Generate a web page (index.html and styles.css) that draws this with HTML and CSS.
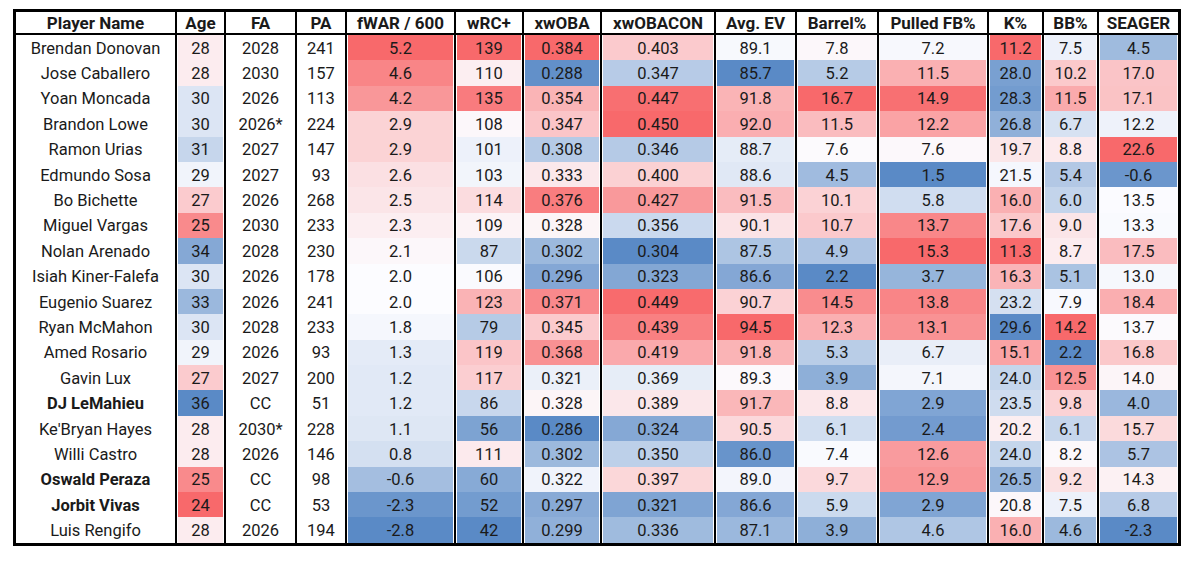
FILE: index.html
```html
<!DOCTYPE html>
<html lang="en">
<head>
<meta charset="utf-8">
<title>Infielder comparison</title>
<link rel="stylesheet" href="styles.css">
</head>
<body>
<div class="wrap">
<table class="stats" id="stats">
<thead>
<tr>
<th class="c1">Player Name</th><th class="c2">Age</th><th class="c3">FA</th><th class="c4">PA</th><th class="c5">fWAR / 600</th><th class="c6">wRC+</th><th class="c7">xwOBA</th><th class="c8">xwOBACON</th><th class="c9">Avg. EV</th><th class="c10">Barrel%</th><th class="c11">Pulled FB%</th><th class="c12">K%</th><th class="c13">BB%</th><th class="c14">SEAGER</th>
</tr>
</thead>
<tbody>
<tr><td>Brendan Donovan</td><td>28</td><td>2028</td><td>241</td><td>5.2</td><td>139</td><td>0.384</td><td>0.403</td><td>89.1</td><td>7.8</td><td>7.2</td><td>11.2</td><td>7.5</td><td>4.5</td></tr>
<tr><td>Jose Caballero</td><td>28</td><td>2030</td><td>157</td><td>4.6</td><td>110</td><td>0.288</td><td>0.347</td><td>85.7</td><td>5.2</td><td>11.5</td><td>28.0</td><td>10.2</td><td>17.0</td></tr>
<tr><td>Yoan Moncada</td><td>30</td><td>2026</td><td>113</td><td>4.2</td><td>135</td><td>0.354</td><td>0.447</td><td>91.8</td><td>16.7</td><td>14.9</td><td>28.3</td><td>11.5</td><td>17.1</td></tr>
<tr><td>Brandon Lowe</td><td>30</td><td>2026*</td><td>224</td><td>2.9</td><td>108</td><td>0.347</td><td>0.450</td><td>92.0</td><td>11.5</td><td>12.2</td><td>26.8</td><td>6.7</td><td>12.2</td></tr>
<tr><td>Ramon Urias</td><td>31</td><td>2027</td><td>147</td><td>2.9</td><td>101</td><td>0.308</td><td>0.346</td><td>88.7</td><td>7.6</td><td>7.6</td><td>19.7</td><td>8.8</td><td>22.6</td></tr>
<tr><td>Edmundo Sosa</td><td>29</td><td>2027</td><td>93</td><td>2.6</td><td>103</td><td>0.333</td><td>0.400</td><td>88.6</td><td>4.5</td><td>1.5</td><td>21.5</td><td>5.4</td><td>-0.6</td></tr>
<tr><td>Bo Bichette</td><td>27</td><td>2026</td><td>268</td><td>2.5</td><td>114</td><td>0.376</td><td>0.427</td><td>91.5</td><td>10.1</td><td>5.8</td><td>16.0</td><td>6.0</td><td>13.5</td></tr>
<tr><td>Miguel Vargas</td><td>25</td><td>2030</td><td>233</td><td>2.3</td><td>109</td><td>0.328</td><td>0.356</td><td>90.1</td><td>10.7</td><td>13.7</td><td>17.6</td><td>9.0</td><td>13.3</td></tr>
<tr><td>Nolan Arenado</td><td>34</td><td>2028</td><td>230</td><td>2.1</td><td>87</td><td>0.302</td><td>0.304</td><td>87.5</td><td>4.9</td><td>15.3</td><td>11.3</td><td>8.7</td><td>17.5</td></tr>
<tr><td>Isiah Kiner-Falefa</td><td>30</td><td>2026</td><td>178</td><td>2.0</td><td>106</td><td>0.296</td><td>0.323</td><td>86.6</td><td>2.2</td><td>3.7</td><td>16.3</td><td>5.1</td><td>13.0</td></tr>
<tr><td>Eugenio Suarez</td><td>33</td><td>2026</td><td>241</td><td>2.0</td><td>123</td><td>0.371</td><td>0.449</td><td>90.7</td><td>14.5</td><td>13.8</td><td>23.2</td><td>7.9</td><td>18.4</td></tr>
<tr><td>Ryan McMahon</td><td>30</td><td>2028</td><td>233</td><td>1.8</td><td>79</td><td>0.345</td><td>0.439</td><td>94.5</td><td>12.3</td><td>13.1</td><td>29.6</td><td>14.2</td><td>13.7</td></tr>
<tr><td>Amed Rosario</td><td>29</td><td>2026</td><td>93</td><td>1.3</td><td>119</td><td>0.368</td><td>0.419</td><td>91.8</td><td>5.3</td><td>6.7</td><td>15.1</td><td>2.2</td><td>16.8</td></tr>
<tr><td>Gavin Lux</td><td>27</td><td>2027</td><td>200</td><td>1.2</td><td>117</td><td>0.321</td><td>0.369</td><td>89.3</td><td>3.9</td><td>7.1</td><td>24.0</td><td>12.5</td><td>14.0</td></tr>
<tr><td class="bold">DJ LeMahieu</td><td>36</td><td>CC</td><td>51</td><td>1.2</td><td>86</td><td>0.328</td><td>0.389</td><td>91.7</td><td>8.8</td><td>2.9</td><td>23.5</td><td>9.8</td><td>4.0</td></tr>
<tr><td>Ke'Bryan Hayes</td><td>28</td><td>2030*</td><td>228</td><td>1.1</td><td>56</td><td>0.286</td><td>0.324</td><td>90.5</td><td>6.1</td><td>2.4</td><td>20.2</td><td>6.1</td><td>15.7</td></tr>
<tr><td>Willi Castro</td><td>28</td><td>2026</td><td>146</td><td>0.8</td><td>111</td><td>0.302</td><td>0.350</td><td>86.0</td><td>7.4</td><td>12.6</td><td>24.0</td><td>8.2</td><td>5.7</td></tr>
<tr><td class="bold">Oswald Peraza</td><td>25</td><td>CC</td><td>98</td><td>-0.6</td><td>60</td><td>0.322</td><td>0.397</td><td>89.0</td><td>9.7</td><td>12.9</td><td>26.5</td><td>9.2</td><td>14.3</td></tr>
<tr><td class="bold">Jorbit Vivas</td><td>24</td><td>CC</td><td>53</td><td>-2.3</td><td>52</td><td>0.297</td><td>0.321</td><td>86.6</td><td>5.9</td><td>2.9</td><td>20.8</td><td>7.5</td><td>6.8</td></tr>
<tr><td>Luis Rengifo</td><td>28</td><td>2026</td><td>194</td><td>-2.8</td><td>42</td><td>0.299</td><td>0.336</td><td>87.1</td><td>3.9</td><td>4.6</td><td>16.0</td><td>4.6</td><td>-2.3</td></tr>
</tbody>
</table>
</div>
<script src="script.js"></script>
</body>
</html>
```

FILE: styles.css
```css
* { box-sizing: border-box; }
html, body { margin: 0; padding: 0; background: #ffffff; }
body {
  font-family: Roboto, "Liberation Sans", sans-serif;
  color: #1a1a1a;
}
.wrap { padding: 9px 0 0 13px; }
.stats {
  border-collapse: separate;
  border-spacing: 0;
  table-layout: fixed;
  width: 1168px;
  border: 3px solid #000;
}
.stats th, .stats td {
  padding: 0;
  text-align: center;
  white-space: nowrap;
  overflow: hidden;
  border-left: 2px solid #000;
}
.stats th:first-child, .stats td:first-child { border-left: none; }
.stats th {
  height: 23px;
  border-bottom: 2px solid #000;
  font-size: 17px;
  font-weight: 700;
  line-height: 20px;
  padding-top: 1px;
}
.stats td {
  height: 25.4px;
  font-size: 16.5px;
  line-height: 20px;
  font-weight: 400;
  padding-top: 2px;
}
.stats td.heat { box-shadow: inset 1px 0 0 #fff, inset -1px 0 0 #fff; }
.stats td.bold { font-weight: 700; }
.c1 { width: 159px; }
.c2 { width: 49px; }
.c3 { width: 71px; }
.c4 { width: 50px; }
.c5 { width: 109px; }
.c6 { width: 68px; }
.c7 { width: 78px; }
.c8 { width: 114px; }
.c9 { width: 81px; }
.c10 { width: 82px; }
.c11 { width: 110px; }
.c12 { width: 55px; }
.c13 { width: 55px; }
.c14 { width: 81px; }
```

FILE: script.js
```js
(function () {
  // Excel-style 3-colour scale: lowest / 50th percentile / highest
  var BLUE = [90, 138, 198], MID = [252, 252, 255], RED = [248, 105, 107];
  // column index -> direction (1 = high is red, -1 = low is red)
  var cols = { 1: -1, 4: 1, 5: 1, 6: 1, 7: 1, 8: 1, 9: 1, 10: 1, 11: -1, 12: 1, 13: 1 };
  var rows = document.querySelectorAll('#stats tbody tr');
  function mix(a, b, t) {
    return 'rgb(' + [0, 1, 2].map(function (i) { return Math.round(a[i] + (b[i] - a[i]) * t); }).join(',') + ')';
  }
  Object.keys(cols).forEach(function (k) {
    var c = +k, dir = cols[k];
    var cells = [], vals = [];
    rows.forEach(function (r) { var td = r.children[c]; cells.push(td); vals.push(parseFloat(td.textContent)); });
    var s = vals.slice().sort(function (a, b) { return a - b; });
    var min = s[0], max = s[s.length - 1];
    var n = s.length, mid = n % 2 ? s[(n - 1) / 2] : (s[n / 2 - 1] + s[n / 2]) / 2;
    var lo = dir > 0 ? BLUE : RED, hi = dir > 0 ? RED : BLUE;
    cells.forEach(function (td, i) {
      var v = vals[i], col;
      if (v <= mid) col = mix(lo, MID, mid === min ? 1 : (v - min) / (mid - min));
      else col = mix(MID, hi, max === mid ? 0 : (v - mid) / (max - mid));
      td.classList.add('heat');
      td.style.backgroundColor = col;
    });
  });
})();
```
